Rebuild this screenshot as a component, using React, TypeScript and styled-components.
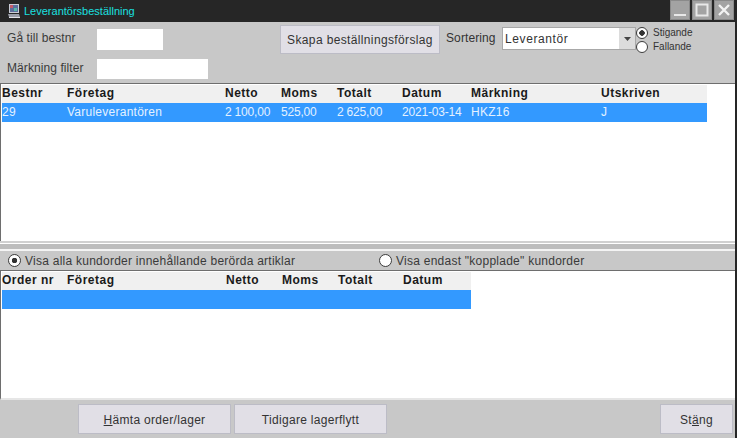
import React from "react";
import styled, { createGlobalStyle } from "styled-components";

const upperColumns = [65, 158, 56, 56, 65, 69, 130, 106];
const lowerColumns = [65, 159, 56, 56, 65, 68];

const upperHeaders = ["Bestnr", "Företag", "Netto", "Moms", "Totalt", "Datum", "Märkning", "Utskriven"];
const upperRow = [
  { value: "29" },
  { value: "Varuleverantören" },
  { value: "2 100,00", numeric: true },
  { value: "525,00", numeric: true },
  { value: "2 625,00", numeric: true },
  { value: "2021-03-14", numeric: true },
  { value: "HKZ16" },
  { value: "J" },
];
const lowerHeaders = ["Order nr", "Företag", "Netto", "Moms", "Totalt", "Datum"];

function AppIcon() {
  return (
    <svg width="14" height="16" viewBox="0 0 14 16">
      <rect x="2" y="1" width="10" height="9" fill="#c9ccd6" />
      <rect x="3" y="2" width="8" height="7" fill="#5c6f9e" />
      <rect x="3" y="2" width="3" height="3" fill="#c65a6a" />
      <rect x="7" y="5" width="3" height="3" fill="#58b8a8" />
      <path d="M1 11h11l1 3H2z" fill="#9a9da8" />
      <path d="M2 14h11v1H2z" fill="#e4e4ea" />
    </svg>
  );
}

function App() {
  return (
    <>
      <GlobalStyle />
      <Window>
        <TitleBar>
          <AppIcon />
          <Title>Leverantörsbeställning</Title>
          <WindowButtons>
            <WindowButton aria-label="Minimera">
              <svg width="20" height="20" viewBox="0 0 20 20">
                <rect x="4" y="14" width="12" height="2" fill="#e8e8e8" />
              </svg>
            </WindowButton>
            <WindowButton aria-label="Maximera">
              <svg width="20" height="20" viewBox="0 0 20 20">
                <rect x="4.5" y="4.5" width="11" height="11" fill="none" stroke="#e8e8e8" strokeWidth="2" />
              </svg>
            </WindowButton>
            <WindowButton aria-label="Stäng">
              <svg width="20" height="20" viewBox="0 0 20 20">
                <path d="M5 5l10 10M15 5L5 15" stroke="#f2f2f2" strokeWidth="2.4" />
              </svg>
            </WindowButton>
          </WindowButtons>
        </TitleBar>

        <FilterPanel>
          <FilterFields>
            <FieldLabel>Gå till bestnr</FieldLabel>
            <TextField $width={66} $height={21} />
            <FieldLabel>Märkning filter</FieldLabel>
            <TextField $width={111} $height={20} />
          </FilterFields>
          <ProposalButton>Skapa beställningsförslag</ProposalButton>
          <SortLabel>Sortering</SortLabel>
          <SortSelect>
            <span>Leverantör</span>
            <SelectArrow>
              <svg width="7" height="4" viewBox="0 0 7 4">
                <path d="M0 0h7L3.5 4z" fill="#444" />
              </svg>
            </SelectArrow>
          </SortSelect>
          <SortOptions>
            <SortOption>
              <Radio $checked $size={12} />
              Stigande
            </SortOption>
            <SortOption>
              <Radio $size={12} />
              Fallande
            </SortOption>
          </SortOptions>
        </FilterPanel>

        <UpperList>
          <GridRow $columns={upperColumns} $head>
            {upperHeaders.map(header => (
              <HeadCell key={header}>{header}</HeadCell>
            ))}
          </GridRow>
          <GridRow $columns={upperColumns} $selected>
            {upperRow.map(cell => (
              <Cell key={cell.value} $numeric={cell.numeric}>
                {cell.value}
              </Cell>
            ))}
          </GridRow>
        </UpperList>

        <Splitter />

        <OrderFilter>
          <OrderOption $width={371}>
            <Radio $checked $size={13} />
            Visa alla kundorder innehållande berörda artiklar
          </OrderOption>
          <OrderOption>
            <Radio $size={13} />
            Visa endast "kopplade" kundorder
          </OrderOption>
        </OrderFilter>

        <LowerList>
          <GridRow $columns={lowerColumns} $head>
            {lowerHeaders.map(header => (
              <HeadCell key={header}>{header}</HeadCell>
            ))}
          </GridRow>
          <GridRow $columns={lowerColumns} $selected>
            {lowerHeaders.map(header => (
              <Cell key={header} />
            ))}
          </GridRow>
        </LowerList>

        <ButtonBar>
          <ActionButton $width={153}>
            <u>H</u>ämta order/lager
          </ActionButton>
          <ActionButton $width={153}>Tidigare lagerflytt</ActionButton>
          <CloseButton $width={73}>
            St<u>ä</u>ng
          </CloseButton>
        </ButtonBar>
      </Window>
    </>
  );
}

const GlobalStyle = createGlobalStyle`
  html, body {
    margin: 0;
    padding: 0;
    background: #262626;
  }
`;

const Window = styled.div`
  width: 737px;
  height: 438px;
  box-sizing: border-box;
  padding-right: 2px;
  display: flex;
  flex-direction: column;
  overflow: hidden;
  background: #c8c8c8;
  font-family: "Liberation Sans", Arial, sans-serif;
  font-size: 12px;
  color: #333;
  box-shadow: inset -2px 0 0 #262626;
`;

const TitleBar = styled.div`
  height: 22px;
  flex: none;
  display: flex;
  align-items: center;
  padding-left: 7px;
  margin-right: -2px;
  background: #262626;
`;

const Title = styled.div`
  margin-left: 3px;
  font-size: 11px;
  color: #1ae0e0;
`;

const WindowButtons = styled.div`
  margin-left: auto;
  margin-right: 3px;
  display: flex;
  gap: 2px;
  align-self: flex-start;
`;

const WindowButton = styled.div`
  width: 20px;
  height: 20px;
  background: #a3a3a3;
  outline: 1px solid #8a8a8a;
  outline-offset: -1px;
`;

const FilterPanel = styled.div`
  height: 62px;
  flex: none;
  box-sizing: border-box;
  display: flex;
  align-items: flex-start;
  padding-top: 3px;
  border-bottom: 1px solid #6e6e6e;
`;

const FilterFields = styled.div`
  width: 280px;
  flex: none;
  box-sizing: border-box;
  padding: 4px 0 0 7px;
  display: grid;
  grid-template-columns: 90px 1fr;
  row-gap: 9px;
  align-items: center;
`;

const FieldLabel = styled.div`
  padding-bottom: 3px;
  font-size: 12px;
  letter-spacing: 0.08px;
  color: #3a3a3a;
`;

const TextField = styled.div<{ $width: number; $height: number }>`
  width: ${p => p.$width}px;
  height: ${p => p.$height}px;
  background: #fff;
`;

const ProposalButton = styled.div`
  width: 160px;
  height: 29px;
  flex: none;
  box-sizing: border-box;
  display: flex;
  align-items: center;
  justify-content: center;
  background: #e1dfe6;
  border: 1px solid #bcbcc6;
  font-size: 12px;
  letter-spacing: 0.36px;
  white-space: nowrap;
`;

const SortLabel = styled.div`
  margin: 6px 0 0 6px;
  width: 56px;
  flex: none;
  font-size: 12px;
  letter-spacing: 0.1px;
`;

const SortSelect = styled.div`
  width: 134px;
  height: 23px;
  margin-top: 2px;
  flex: none;
  box-sizing: border-box;
  display: flex;
  align-items: center;
  justify-content: space-between;
  padding-left: 2px;
  background: #fff;
  border: 1px solid #a8a8a8;
  font-size: 12px;
  letter-spacing: 0.6px;
`;

const SelectArrow = styled.div`
  width: 16px;
  height: 21px;
  display: flex;
  align-items: center;
  justify-content: center;
  background: #dcdcdc;
`;

const SortOptions = styled.div`
  margin-top: 1px;
  display: flex;
  flex-direction: column;
  gap: 1px;
`;

const SortOption = styled.div`
  height: 13px;
  display: flex;
  align-items: center;
  gap: 5px;
  font-size: 10px;
`;

const Radio = styled.span<{ $checked?: boolean; $size: number }>`
  width: ${p => p.$size}px;
  height: ${p => p.$size}px;
  flex: none;
  box-sizing: border-box;
  border: 1px solid #3c3c3c;
  border-radius: 50%;
  background: ${p => (p.$checked ? "radial-gradient(circle, #333 0 2.5px, #fff 3px)" : "#fff")};
`;

const UpperList = styled.div`
  height: 157px;
  flex: none;
  box-sizing: border-box;
  padding: 1px 0 0 1px;
  background: #fff;
  border-left: 1px solid #6e6e6e;
`;

const GridRow = styled.div<{ $columns: number[]; $head?: boolean; $selected?: boolean }>`
  display: grid;
  width: max-content;
  box-sizing: border-box;
  padding-bottom: 2px;
  grid-template-columns: ${p => p.$columns.map(c => `${c}px`).join(" ")};
  height: ${p => (p.$head ? 18 : 19)}px;
  align-items: center;
  background: ${p => (p.$head ? "#f0f0f0" : p.$selected ? "#3399ff" : "transparent")};
  color: ${p => (p.$head ? "#1a1a1a" : "#e4f1ff")};
`;

const HeadCell = styled.div`
  font-size: 12px;
  font-weight: 700;
  letter-spacing: 0.5px;
  white-space: nowrap;
`;

const Cell = styled.div<{ $numeric?: boolean }>`
  font-size: 12px;
  letter-spacing: ${p => (p.$numeric ? "-0.2px" : "0.25px")};
  white-space: nowrap;
`;

const Splitter = styled.div`
  height: 10px;
  flex: none;
  box-sizing: border-box;
  background: linear-gradient(#d0d0d0 0 2px, #fff 2px 3px, #bdbdbd 3px 8px, #f4f4f4 8px 10px);
`;

const OrderFilter = styled.div`
  height: 20px;
  flex: none;
  box-sizing: border-box;
  display: flex;
  align-items: center;
  padding-left: 8px;
  border-bottom: 1px solid #6e6e6e;
`;

const OrderOption = styled.div<{ $width?: number }>`
  ${p => (p.$width ? `width: ${p.$width}px;` : "")}
  display: flex;
  align-items: center;
  gap: 4px;
  font-size: 12px;
  color: #3a3a3a;
  letter-spacing: 0.25px;
`;

const LowerList = styled.div`
  height: 129px;
  flex: none;
  box-sizing: border-box;
  padding: 1px 0 0 1px;
  background: #fff;
  border-left: 1px solid #6e6e6e;
  border-bottom: 2px solid #e6e6e6;
`;

const ButtonBar = styled.div`
  flex: 1;
  display: flex;
  align-items: flex-start;
  gap: 3px;
  padding: 4px 0 0 78px;
`;

const ActionButton = styled.div<{ $width: number }>`
  width: ${p => p.$width}px;
  height: 30px;
  box-sizing: border-box;
  padding-top: 1px;
  display: flex;
  align-items: center;
  justify-content: center;
  white-space: pre;
  background: #e1dfe6;
  border: 1px solid #bcbcc6;
  font-size: 12px;
  letter-spacing: 0.3px;
`;

const CloseButton = styled(ActionButton)`
  margin-left: auto;
  margin-right: 2px;
`;

export default App;
